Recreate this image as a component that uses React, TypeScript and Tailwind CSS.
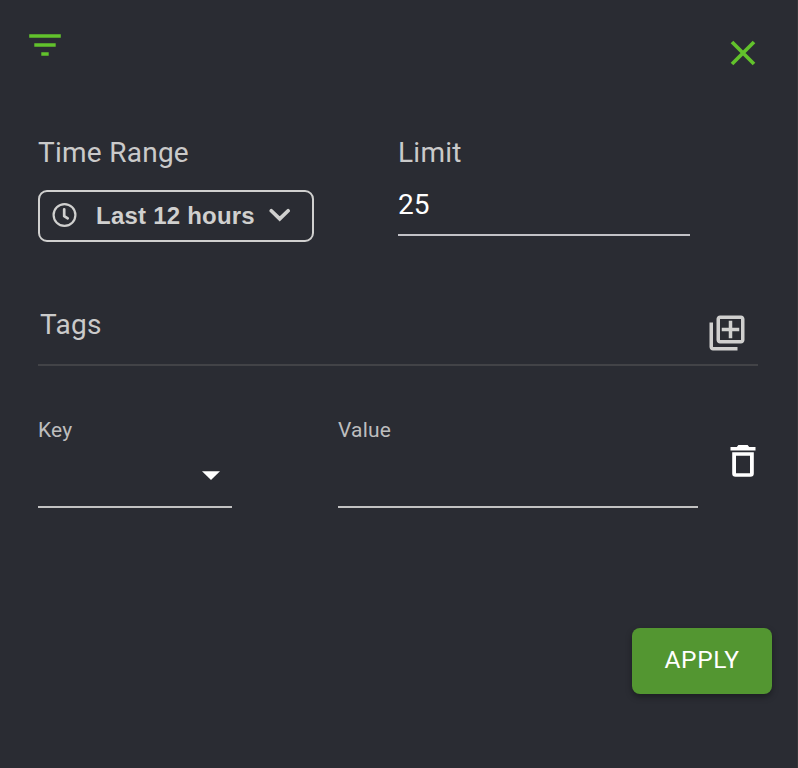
import React from 'react';

function FilterIcon() {
  return (
    <svg viewBox="0 0 32 22" className="h-[22px] w-8 fill-[#62c22c]">
      <path d="M.2 .3h31.600v3.500H.2zM5.300 9.200h21.400v3.500H5.300zM12.300 18.200h7.400v3.500h-7.400z" />
    </svg>
  );
}

function CloseIcon() {
  return (
    <svg viewBox="0 0 28 28" className="size-7 fill-none stroke-[#62c22c] stroke-[3.7]">
      <path d="M3 3l22 22M25 3L3 25" />
    </svg>
  );
}

function ClockIcon() {
  return (
    <svg viewBox="0 0 25 24" className="mb-0.5 h-6 w-[25px] fill-none stroke-[#d0d0cf]">
      <circle cx="12.5" cy="12" r="10.9" strokeWidth="2.2" />
      <path d="M12.200 6.300v6.900l3.500 2.200" strokeWidth="2.700" strokeLinecap="round" strokeLinejoin="round" />
    </svg>
  );
}

function ChevronIcon() {
  return (
    <svg viewBox="0 0 22 14" className="mb-0.5 h-3.5 w-[22px] fill-none stroke-[#d0d0cf] stroke-[3.7]">
      <path d="M2.300 2.700l8.400 8.200L19.100 2.700" strokeLinecap="round" strokeLinejoin="miter" />
    </svg>
  );
}

function LibraryAddIcon() {
  return (
    <svg viewBox="0 0 24 24" className="size-[42px] fill-[#d0d0cf]">
      <path d="M4 6H2v14c0 1.1.9 2 2 2h14v-2H4V6zm16-4H8c-1.1 0-2 .9-2 2v12c0 1.1.9 2 2 2h12c1.1 0 2-.9 2-2V4c0-1.1-.9-2-2-2zm0 14H8V4h12v12zM13 15h2v-4h4V9h-4V5h-2v4H9v2h4z" />
    </svg>
  );
}

function TrashIcon() {
  return (
    <svg viewBox="0 0 26 32" className="h-8 w-[26px] fill-white">
      <path d="M6.800 2l1.600-1.900h9.200L19.200 2h6.300v3.600H.5V2z" />
      <path fillRule="evenodd" d="M2.200 7.200h21.600v21.300a3.300 3.300 0 0 1-3.300 3.300h-15a3.300 3.300 0 0 1-3.300-3.300zM6 10.800v17.400h14V10.800z" />
    </svg>
  );
}

export default function App() {
  return (
    <main className="h-[768px] w-[798px] overflow-hidden border-r border-[#35363a] bg-[#2a2c33] font-[Roboto,sans-serif] text-[#cacaca]">
      <header className="flex h-[136px] justify-between pr-[40px] pl-[29px]">
        <div className="pt-[34px]">
          <FilterIcon />
        </div>
        <button className="h-7 pt-[39px]" aria-label="Close">
          <CloseIcon />
        </button>
      </header>

      <section className="flex h-[164px] pl-[38px]">
        <div className="w-[360px]">
          <h2 className="text-[28px] leading-[34px] tracking-[0.26px]">Time Range</h2>
          <button className="mt-5 flex h-[52px] w-[276px] items-center rounded-[9px] border-2 border-[#d0d0cf] pl-3 font-['Liberation_Sans',sans-serif] text-[24px] font-bold tracking-[0.22px] text-[#d0d0cf]">
            <ClockIcon />
            <span className="ml-[19px] w-[159px] whitespace-nowrap">Last 12 hours</span>
            <span className="ml-[13.500px]">
              <ChevronIcon />
            </span>
          </button>
        </div>
        <div className="w-[292px]">
          <h2 className="text-[28px] leading-[34px] tracking-[0.26px]">Limit</h2>
          <div className="mt-[18px] h-12 border-b-2 border-[#c2c2c7] text-[28px] leading-[34px] text-white">25</div>
        </div>
      </section>

      <section className="mr-[39px] ml-[38px] flex h-[66px] justify-between border-b-2 border-[#424347] pr-[10px] pl-0.5">
        <h2 className="pt-2 text-[28px] leading-[34px] tracking-[0.26px]">Tags</h2>
        <div className="pt-3">
          <LibraryAddIcon />
        </div>
      </section>

      <section className="flex h-[262px] pt-[50px] pl-[38px]">
        <div className="h-[92px] w-[194px] border-b-2 border-[#c2c2c2]">
          <div className="text-[21px] leading-7 tracking-[0.2px] text-[#bdbdbe]">Key</div>
          <svg viewBox="0 0 18 9" className="mt-[27px] ml-[164px] h-[9px] w-[18px] fill-white">
            <path d="M0 .3h18L9 9z" />
          </svg>
        </div>
        <div className="ml-[106px] h-[92px] w-[360px] border-b-2 border-[#c2c2c2]">
          <div className="text-[21px] leading-7 tracking-[0.2px] text-[#bdbdbe]">Value</div>
        </div>
        <div className="pt-[29px] pl-8">
          <TrashIcon />
        </div>
      </section>

      <footer className="flex justify-end pr-[25px]">
        <button className="h-[66px] w-[140px] rounded-lg bg-[#539631] pb-0.5 text-[24.500px] tracking-[0.6px] text-white shadow-[0_3px_6px_rgba(0,0,0,0.35)]">
          APPLY
        </button>
      </footer>
    </main>
  );
}
